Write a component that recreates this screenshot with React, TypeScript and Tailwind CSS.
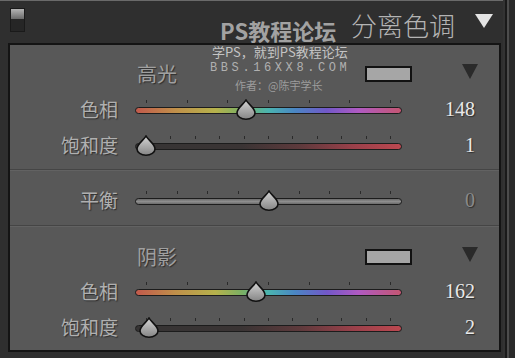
import React, { useId } from "react";

type Kind = "hue" | "sat" | "bal";

function Thumb({ left }: { left: number }) {
  const id = useId();
  return (
    <svg
      width="20"
      height="21"
      viewBox="0 0 20 21"
      className="absolute top-[8px]"
      style={{ left }}
    >
      <defs>
        <linearGradient id={id} x1="0" y1="0" x2="0" y2="1">
          <stop offset="0" stopColor="#d4d4d4" />
          <stop offset="1" stopColor="#858585" />
        </linearGradient>
      </defs>
      <path
        d="M10 1 C12 5 19 9 19 14 A9 6.2 0 0 1 1 14 C1 9 8 5 10 1 Z"
        fill={`url(#${id})`}
        stroke="#111"
        strokeWidth="1.6"
      />
    </svg>
  );
}

function Slider({ kind, pos, ticks }: { kind: Kind; pos: number; ticks: number }) {
  const track =
    kind === "hue"
      ? "bg-[linear-gradient(to_right,#c25a4c_0%,#c0904a_15%,#b6b24c_30%,#7ab064_40%,#4ab4b0_50%,#4a86c4_60%,#7258c8_72%,#b05ac2_84%,#c45672_100%)]"
      : kind === "sat"
      ? "bg-[linear-gradient(to_right,#363434_0%,#3a3434_40%,#5e3a3c_62%,#9a404a_82%,#bc4850_100%)]"
      : "bg-[linear-gradient(to_bottom,#6a6a6a,#8e8e8e,#6a6a6a)]";
  const tickList = Array.from({ length: ticks }, (_, i) => 11 + (i * 244) / (ticks - 1));
  return (
    <div className="relative w-[267px] h-[36px]">
      {tickList.map((x, i) => (
        <div
          key={i}
          className="absolute top-[9px] w-px h-[3px] bg-[#2a2a2a]"
          style={{ left: Math.round(x) }}
        />
      ))}
      <div
        className={`absolute left-0 right-0 top-[16px] h-[7px] rounded-full border border-[#1c1c1c] ${track}`}
      />
      <Thumb left={Math.round(9 + 249 * pos - 10)} />
    </div>
  );
}

const labelCls =
  "w-[108px] text-right text-[19px] leading-[36px] text-[#b0b0b0] font-['Noto_Sans_CJK_SC',sans-serif] [text-shadow:1px_1px_1px_#2e2e2e]";
const valueCls =
  "w-[73px] text-right text-[20px] leading-[36px] font-['Liberation_Serif',serif] [text-shadow:1px_1px_1px_#2e2e2e]";

function Row({
  label,
  kind,
  pos,
  ticks,
  value,
  dim,
}: {
  label: string;
  kind: Kind;
  pos: number;
  ticks: number;
  value: string;
  dim?: boolean;
}) {
  return (
    <div className="flex h-[36px] items-start">
      <div className={labelCls}>{label}</div>
      <div className="ml-[17px]">
        <Slider kind={kind} pos={pos} ticks={ticks} />
      </div>
      <div className={`${valueCls} ${dim ? "text-[#8a8a8a]" : "text-[#e8e8e8]"}`}>{value}</div>
    </div>
  );
}

function Header({ title }: { title: string }) {
  return (
    <div className="flex h-[24px] items-center">
      <div className="ml-[127px] w-[228px] text-[20px] leading-[24px] text-[#a0a0a0] font-['Noto_Sans_CJK_SC',sans-serif] [text-shadow:1px_1px_1px_#2e2e2e]">
        {title}
      </div>
      <div className="w-[47px] h-[16px] border-2 border-[#121212] bg-[#a6a6a6]" />
      <svg width="16" height="15" viewBox="0 0 16 15" className="ml-[50px] -mt-[6px]">
        <path d="M0 0 H16 L8 15 Z" fill="#2a2a2a" />
      </svg>
    </div>
  );
}

function Divider() {
  return (
    <div className="flex flex-col">
      <div className="h-px bg-[#454545]" />
      <div className="h-px bg-[#626262]" />
    </div>
  );
}

export default function App() {
  return (
    <div className="relative flex w-[515px] h-[358px] overflow-hidden bg-[#2f2f2f] font-['Noto_Sans_CJK_SC',sans-serif]">
      <div className="flex flex-col w-[503px]">
        <div className="h-px bg-[#6a6a6a]" />
        <div className="flex h-[42px] items-start">
          <div className="ml-[10px] mt-[7px] flex flex-col w-[15px] h-[24px] border border-[#1a1a1a] bg-[#262626]">
            <div className="h-[10px] bg-[linear-gradient(to_bottom,#b4b4b4,#6a6a6a)]" />
          </div>
          <div className="ml-auto mt-[9px] text-[26px] leading-[30px] font-light text-[#b4b4b4] font-['Noto_Sans_CJK_SC',sans-serif]">
            分离色调
          </div>
          <svg width="18" height="14" viewBox="0 0 18 14" className="ml-[20px] mt-[13px] mr-[10px]">
            <path d="M0 0 H18 L9 14 Z" fill="#e4e4e4" />
          </svg>
        </div>
        <div className="ml-[8px] w-[493px] h-[309px] border-2 border-[#141414] bg-[#585858] flex flex-col">
          <div className="flex flex-col pt-[17px] h-[124px]">
            <Header title="高光" />
            <div className="mt-[5px]">
              <Row label="色相" kind="hue" pos={148 / 360} ticks={7} value="148" />
              <Row label="饱和度" kind="sat" pos={0.01} ticks={11} value="1" />
            </div>
          </div>
          <Divider />
          <div className="flex flex-col pt-[11px] h-[54px]">
            <Row label="平衡" kind="bal" pos={0.5} ticks={9} value="0" dim />
          </div>
          <Divider />
          <div className="flex flex-col pt-[18px]">
            <Header title="阴影" />
            <div className="mt-[4px]">
              <Row label="色相" kind="hue" pos={162 / 360} ticks={7} value="162" />
              <Row label="饱和度" kind="sat" pos={0.02} ticks={11} value="2" />
            </div>
          </div>
        </div>
      </div>
      <div className="flex w-[12px]">
        <div className="w-[2px] bg-[#333333]" />
        <div className="w-[2px] bg-[#1a1a1a]" />
        <div className="w-[2px] bg-[#4c4c4c]" />
        <div className="w-[6px] bg-[#2a2a2a]" />
      </div>

      {/* watermark overlay */}
      <div className="absolute left-[220px] top-[18px] text-[22px] leading-[24px] font-bold text-[#a2a2a2] font-['Noto_Sans_CJK_SC',sans-serif]">
        PS教程论坛
      </div>
      <div className="absolute left-[212px] top-[44px] text-[13px] leading-[15px] text-[#c4c4c4] font-['Noto_Sans_CJK_SC',sans-serif]">
        学PS，就到PS教程论坛
      </div>
      <div className="absolute left-[210px] top-[61px] text-[12px] leading-[14px] tracking-[3.6px] text-[#b0b0b0] font-['Liberation_Mono',monospace]">
        BBS.16XX8.COM
      </div>
      <div className="absolute left-[235px] top-[78px] text-[11px] leading-[14px] text-[#9c9c9c] font-['Noto_Sans_CJK_SC',sans-serif]">
        作者：@陈宇学长
      </div>
    </div>
  );
}
